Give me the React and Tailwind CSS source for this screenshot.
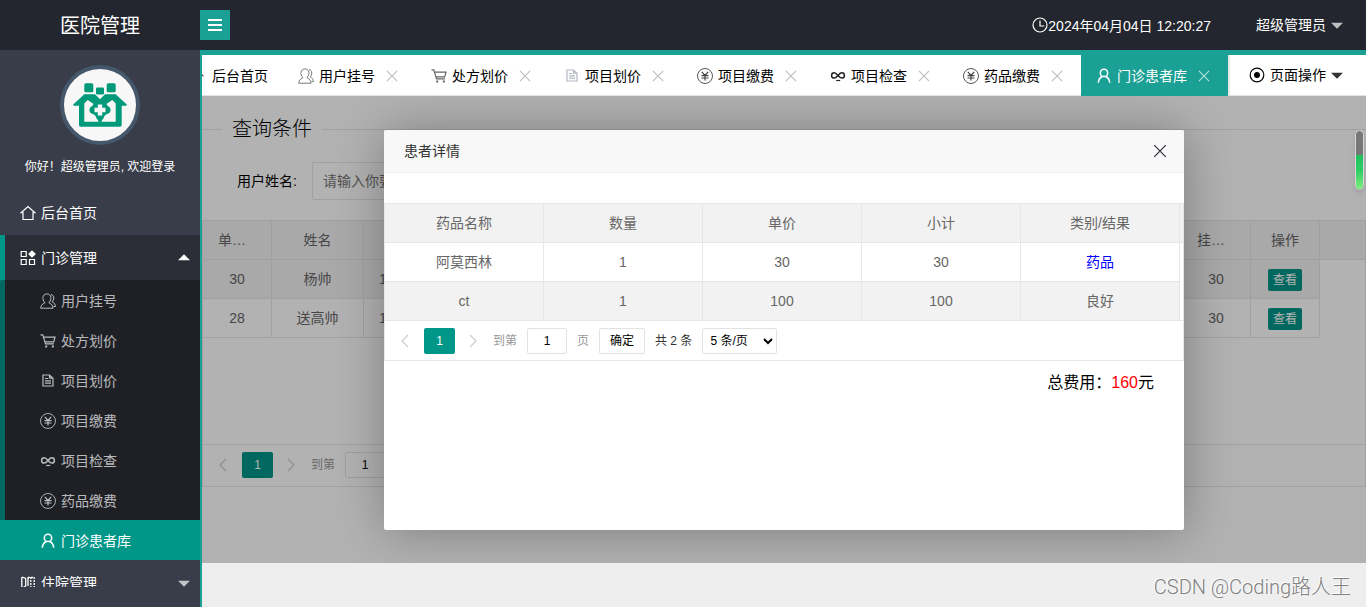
import React, { useState } from 'react';

const Icon = ({ name, className = '' }) => {
  const paths = {
    home: (
      <path d="M0.5 8.2 8 1.5l7.500 6.700M3 7v7.500h10V7" />
    ),
    grid: (
      <>
        <path d="M1.2 1.500h5v5h-5zM1.200 9.500h5v5h-5zM9.500 9.500h5v5h-5z" />
        <path d="M12 0.200 15.900 4 12 7.800 8.100 4z" fill="currentColor" stroke="none" />
      </>
    ),
    users: (
      <path d="M4.600 9.300C3.200 7.800 2.800 6 2.900 4.500 3.100 2.300 4.700 0.900 6.900 0.900s3.900 1.400 4 3.600c.1 1.600-.4 3.400-1.700 4.700v.9c2.300.9 3.600 2 3.900 5.100H.7c.3-3 1.600-4.200 3.900-5.100zM11 1.600c1.800.3 2.900 1.600 2.800 3.400-.1 1.600-.7 2.800-1.700 3.900 1.900.7 3.100 1.900 3.300 4.600h-1.800" strokeWidth="1" />
    ),
    cart: (
      <>
        <path d="M0.500 1.800h2.300l2.700 9h8.500M3.500 4.200h11.500l-1.300 4.600H4.900" />
        <path d="M5.200 12.500h2v2h-2zM11.800 12.500h2v2h-2z" fill="currentColor" stroke="none" />
      </>
    ),
    doc: (
      <path d="M3 2h6.500L13 5.200V13H3zM9.500 2v3.200H13M5 5.500h3M5 7.800h6M5 10.200h6" />
    ),
    yen: (
      <>
        <circle cx="8" cy="8" r="7.500" strokeWidth="0.900" />
        <path d="M4.800 3.800 8 7.500l3.200-3.700M8 7.500v5M4.500 7.700h7M4.500 10h7" strokeWidth="1.200" />
      </>
    ),
    infinity: (
      <>
        <path d="M8 7.500C6.700 6 5.800 4.800 4.200 4.800a2.600 2.600 0 0 0 0 5.200C5.800 10 6.800 8.800 8 7.500S10.200 4.800 11.800 4.800a2.600 2.600 0 0 1 0 5.200C10.200 10 9.300 9 8 7.500z" strokeWidth="1.500" />
        <path d="M6.200 12.500h4" />
      </>
    ),
    user: (
      <path d="M8 8.600a3.700 3.700 0 1 0 0-7.400 3.700 3.700 0 0 0 0 7.400zM2.300 14.800c.2-3.300 1.700-5.300 3.900-6.300M13.700 14.800c-.2-3.300-1.700-5.300-3.900-6.300" strokeWidth="1.500" />
    ),
    book: (
      <>
        <path d="M1.800 2v12M1.800 2l4 1.300M5.700 3.300V11l-3.900 2.500M8 2v9" strokeWidth="1.300" />
        <path d="M10.800 2v12M14.200 2v12M5.500 13.500h9M8 2.500h6" strokeDasharray="2 1" strokeWidth="1.300" />
      </>
    ),
    clock: (
      <>
        <circle cx="8" cy="8" r="7" />
        <path d="M8 3.500V9h4.200" />
      </>
    ),
    radio: (
      <>
        <circle cx="8" cy="8" r="6.800" />
        <circle cx="8" cy="8" r="3" fill="currentColor" stroke="none" />
      </>
    ),
    close: <path d="M2.200 2.200 13.800 13.800M13.800 2.200 2.200 13.800" />,
    left: <path d="M11 2 5 8l6 6" />,
    right: <path d="m5 2 6 6-6 6" />,
    up: <path d="M0 11 8 3l8 8z" fill="currentColor" stroke="none" />,
    down: <path d="M0 5h16l-8 8z" fill="currentColor" stroke="none" />,
  };
  return (
    <svg
      viewBox="0 0 16 16"
      fill="none"
      stroke="currentColor"
      strokeWidth="1.200"
      aria-hidden="true"
      className={`shrink-0 ${className}`}
    >
      {paths[name]}
    </svg>
  );
};

const subMenu = [
  { icon: 'users', label: '用户挂号' },
  { icon: 'cart', label: '处方划价' },
  { icon: 'doc', label: '项目划价' },
  { icon: 'yen', label: '项目缴费' },
  { icon: 'infinity', label: '项目检查' },
  { icon: 'yen', label: '药品缴费' },
  { icon: 'user', label: '门诊患者库' },
];

const iconColor = {
  users: 'text-[#777]',
  cart: 'text-[#666]',
  doc: 'text-[#b4b8c4]',
  yen: 'text-[#444]',
  infinity: 'text-[#222]',
};

const pacientes = [
  { id: 30, name: '杨帅', phone: '1', fee: 30 },
  { id: 28, name: '送高帅', phone: '1', fee: 30 },
];

const items = [
  { name: '阿莫西林', count: 1, price: 30, total: 30, type: '药品' },
  { name: 'ct', count: 1, price: 100, total: 100, type: '良好' },
];

const Logo = () => (
  <svg viewBox="0 0 56 46" className="w-14 h-[46px]" aria-hidden="true">
    <g fill="#009a7b">
      <rect x="12.300" y="1.200" width="9" height="9" rx="1.500" />
      <rect x="24" y="5.500" width="8" height="7" rx="1.200" />
      <rect x="34.700" y="1.200" width="9" height="9" rx="1.500" />
      <path d="M12.300 12.300H23l5 5 5-5h10.700L55 22.800l-1 1h-4.300V43a1.700 1.700 0 0 1-1.700 1.700H8.700A1.700 1.700 0 0 1 7 43V23.800H2l-1-1z" />
    </g>
    <path d="M12.300 21.500l3.400-3.500 5.800 4-4 6 8 8 1 3.700H12.300zM43.700 21.500L40.300 18l-5.800 4 4 6-8 8-1 3.700h14.200z" fill="#f7f7f7" />
    <path d="M28 17.500c2.500 0 4 1.800 4 4 0 1.500.8 2.500 2.500 2.500 2.200 0 4 1.500 4 4s-1.800 4-4 4c-1.700 0-2.500 1-2.500 2.500 0 2.200-1.500 4-4 4s-4-1.800-4-4c0-1.500-.8-2.500-2.500-2.500-2.200 0-4-1.500-4-4s1.800-4 4-4c1.700 0 2.500-1 2.500-2.500 0-2.200 1.500-4 4-4z" fill="#009a7b" />
    <path d="M25.800 22.500h4.400v3.300h3.300v4.400h-3.300v3.300h-4.400v-3.300h-3.300v-4.400h3.300z" fill="#f7f7f7" />
  </svg>
);

const Sidebar = () => (
  <aside className="w-[200px] shrink-0 bg-[#393D49] text-white flex flex-col overflow-hidden">
    <div className="h-[140px] shrink-0 pt-[15px] flex flex-col items-center">
      <div className="w-20 h-20 rounded-full border-4 border-[#44576b] bg-[#f7f7f7] flex items-center justify-center">
        <Logo />
      </div>
      <p className="mt-3 text-xs leading-5 whitespace-nowrap">你好！超级管理员, 欢迎登录</p>
    </div>
    <nav className="flex-1 min-h-0 overflow-hidden mb-5">
      <a href="#home" className="h-[45px] px-5 flex items-center gap-[5px]">
        <Icon name="home" className="w-4 h-4" />
        后台首页
      </a>
      <div className="bg-[linear-gradient(to_right,#009688_5px,#2b2e37_5px)]">
        <a href="#clinic" className="h-[45px] pl-5 pr-[10px] flex items-center gap-[5px]">
          <Icon name="grid" className="w-4 h-4" />
          <span className="flex-1">门诊管理</span>
          <Icon name="up" className="w-3 h-3" />
        </a>
        <div className="bg-black/30 rounded-t-xs">
          {subMenu.map((m, i) => (
            <a
              key={m.label}
              href={`#sub-${i}`}
              className={`h-10 pl-10 pt-0.5 flex items-center gap-[5px] ${
                m.label === '门诊患者库' ? 'bg-[#009688] text-white' : 'text-white/70'
              }`}
            >
              <Icon name={m.icon} className="w-4 h-4" />
              {m.label}
            </a>
          ))}
        </div>
      </div>
      <a href="#hospital" className="h-[45px] pl-5 pr-[10px] flex items-center gap-[5px]">
        <Icon name="book" className="w-4 h-4" />
        <span className="flex-1">住院管理</span>
        <Icon name="down" className="w-3 h-3 text-white/70" />
      </a>
    </nav>
  </aside>
);

const Tabs = () => (
  <div className="h-[41px] shrink-0 flex bg-white text-black border-b border-[#e2e2e2]">
    <div className="flex-1 min-w-0 flex justify-end overflow-hidden -mb-px">
      <a href="#home" className="shrink-0 pl-3 pr-[15px] flex items-center gap-2">
        <Icon name="home" className="w-4 h-4 text-[#555]" />
        后台首页
      </a>
      {subMenu.map((m) => {
        const active = m.label === '门诊患者库';
        return (
          <div
            key={m.label}
            className={`shrink-0 pl-[15px] pr-[17px] flex items-center gap-[5px] ${active ? 'bg-[#1aa094] text-white' : ''}`}
          >
            <Icon name={m.icon} className={`w-4 h-4 ${active ? 'text-white' : iconColor[m.icon]}`} />
            <span>{m.label}</span>
            <button aria-label={`关闭${m.label}`} className={`ml-[5px] ${active ? 'text-white/70' : 'text-[#bbb]'}`}>
              <Icon name="close" className="w-[14px] h-[14px]" />
            </button>
          </div>
        );
      })}
    </div>
    <button className="w-[138px] shrink-0 border-l-2 border-[#e8e8e8] pr-[23px] flex items-center justify-end gap-[5px]">
      <Icon name="radio" className="w-4 h-4" />
      页面操作
      <Icon name="down" className="w-3 h-3 text-[#333]" />
    </button>
  </div>
);

const Pager = ({ id, children }) => (
  <div className="pt-[7px] px-[15px] flex items-center text-xs text-[#333]">
    <button aria-label="上一页" className="w-3 mr-3 text-[#ccc]">
      <Icon name="left" className="w-4 h-4 -ml-[3px]" />
    </button>
    <button className="w-[31px] h-[26px] rounded-xs bg-[#009688] text-white">1</button>
    <button aria-label="下一页" className="w-4 ml-[10px] mr-3 text-[#ccc]">
      <Icon name="right" className="w-4 h-4" />
    </button>
    <label htmlFor={id} className="text-[#999] mr-[10px]">到第</label>
    <input
      id={id}
      defaultValue="1"
      className="w-10 h-[26px] border border-[#e2e2e2] rounded-xs bg-white text-center text-black"
    />
    {children}
  </div>
);

const th = 'h-[39px] border-b border-r border-[#e6e6e6] font-normal text-center';

const PatientPage = () => (
  <div className="h-full bg-white flex flex-col">
    <fieldset className="mt-5 border-t border-[#e6e6e6]">
      <legend className="ml-5 px-[10px] text-xl leading-[26px] font-light text-black">查询条件</legend>
      <div className="mt-5 ml-[35px] flex items-center gap-[15px] text-black">
        <label htmlFor="userName">用户姓名:</label>
        <input
          id="userName"
          placeholder="请输入你要查询"
          className="w-[190px] h-[38px] px-[10px] border border-[#e6e6e6] rounded-xs placeholder:text-[#757575]"
        />
      </div>
    </fieldset>

    <div className="mt-5 h-[267px] border border-[#e6e6e6] flex flex-col">
      <div className="flex-1">
        <table className="w-full table-fixed border-separate border-spacing-0 text-[#666]">
          <thead>
            <tr className="bg-[#f2f2f2]">
              <th className={`${th} w-[69px] px-[15px] truncate`}>单据编号</th>
              <th className={`${th} w-[92px]`}>姓名</th>
              <th className={th}></th>
              <th className={`${th} w-[69px] px-[15px] truncate`}>挂号费用</th>
              <th className={`${th} w-[69px]`}>操作</th>
              <th className="w-[45px] border-b border-[#e6e6e6]"></th>
            </tr>
          </thead>
          <tbody>
            {pacientes.map((p, i) => (
              <tr key={p.id}>
                <td className={`${th} ${i === 0 ? 'bg-[#f2f2f2]' : ''}`}>{p.id}</td>
                <td className={`${th} ${i === 0 ? 'bg-[#f2f2f2]' : ''}`}>{p.name}</td>
                <td className={`h-[39px] border-b border-r border-[#e6e6e6] pl-[15px] text-left ${i === 0 ? 'bg-[#f2f2f2]' : ''}`}>{p.phone}</td>
                <td className={`${th} ${i === 0 ? 'bg-[#f2f2f2]' : ''}`}>{p.fee}</td>
                <td className={`${th} pt-0.5 ${i === 0 ? 'bg-[#f2f2f2]' : ''}`}>
                  <button className="h-[22px] px-[5px] rounded-xs bg-[#009688] text-white text-xs align-middle">查看</button>
                </td>
                <td></td>
              </tr>
            ))}
          </tbody>
        </table>
      </div>
      <div className="h-[42px] border-t border-[#e6e6e6]">
        <Pager id="mainPage" />
      </div>
    </div>
  </div>
);

const DetailModal = ({ onClose }) => (
  <div role="dialog" aria-label="患者详情" className="w-[800px] h-[400px] rounded-xs bg-white shadow-[1px_1px_50px_rgba(0,0,0,0.3)]">
    <div className="h-[43px] pl-5 pr-4 flex items-center justify-between rounded-t-xs bg-[#f8f8f8] border-b border-[#eee] text-[#333]">
      <h2>患者详情</h2>
      <button onClick={onClose} aria-label="关闭" className="text-[#2d2c3b]">
        <Icon name="close" className="w-4 h-4" />
      </button>
    </div>

    <div className="mt-[30px] border border-[#e6e6e6]">
      <table className="w-full table-fixed border-separate border-spacing-0 text-[#666]">
        <thead>
          <tr className="bg-[#f2f2f2]">
            <th className={`${th} w-[159px]`}>药品名称</th>
            <th className={`${th} w-[159px]`}>数量</th>
            <th className={`${th} w-[159px]`}>单价</th>
            <th className={`${th} w-[159px]`}>小计</th>
            <th className={`${th} w-[159px]`}>类别/结果</th>
            <th className="border-b border-[#e6e6e6]"></th>
          </tr>
        </thead>
        <tbody>
          {items.map((it, i) => {
            const cell = `${th} ${i === 1 ? 'bg-[#f2f2f2]' : ''}`;
            return (
              <tr key={it.name}>
                <td className={cell}>{it.name}</td>
                <td className={cell}>{it.count}</td>
                <td className={cell}>{it.price}</td>
                <td className={cell}>{it.total}</td>
                <td className={`${cell} ${it.type === '药品' ? 'text-[#00f]' : ''}`}>{it.type}</td>
                <td className={i === 1 ? 'border-b border-[#e6e6e6]' : ''}></td>
              </tr>
            );
          })}
        </tbody>
      </table>
      <div className="h-[39px]">
        <Pager id="detailPage">
          <span className="mx-[10px] text-[#999]">页</span>
          <button className="w-[46px] h-[26px] border border-[#e2e2e2] rounded-xs bg-white text-black">确定</button>
          <span className="mx-[10px]">共 2 条</span>
          <select aria-label="每页条数" className="w-[75px] h-[26px] pl-[3px] border border-[#e2e2e2] rounded-xs bg-white text-black">
            <option>5 条/页</option>
          </select>
        </Pager>
      </div>
    </div>

    <p className="mt-[10px] pr-[30px] text-right text-base leading-6 text-black">
      总费用：<span className="text-[#f00]">160</span>元
    </p>
  </div>
);

const App = () => {
  const [open, setOpen] = useState(true);

  return (
    <div className="h-screen flex flex-col overflow-hidden text-sm font-['Liberation_Sans','Noto_Sans_CJK_SC',sans-serif]">
      {/* Header */}
      <header className="h-[50px] shrink-0 bg-[#23262E] text-white flex items-center">
        <h1 className="w-[200px] pt-0.5 text-xl text-center">医院管理</h1>
        <button aria-label="菜单" className="w-[30px] h-[30px] bg-[#1aa094] flex flex-col items-center justify-center gap-[3px]">
          <span className="w-[14px] h-0.5 bg-white" />
          <span className="w-[14px] h-0.5 bg-white" />
          <span className="w-[14px] h-0.5 bg-white" />
        </button>
        <div className="flex-1 flex items-center justify-end pr-[23px]">
          <Icon name="clock" className="w-4 h-4" />
          <time className="pt-0.5">2024年04月04日 12:20:27</time>
          <button className="ml-[45px] flex items-center gap-[5px]">
            超级管理员
            <Icon name="down" className="w-3 h-3 text-white/70" />
          </button>
        </div>
      </header>

      <div className="flex-1 min-h-0 flex">
        <Sidebar />
        <div className="flex-1 min-w-0 flex flex-col border-l-2 border-t-[5px] border-[#1aa094]">
          <Tabs />
          <main className="flex-1 min-h-0 relative">
            <PatientPage />
            {open && (
              <div className="absolute inset-0 bg-black/30 flex items-center justify-center overflow-hidden">
                <DetailModal onClose={() => setOpen(false)} />
              </div>
            )}
            <div className="absolute top-[34px] right-[2px] w-[9px] h-[60px] rounded-full border border-[#d8d8d8] overflow-hidden bg-[#777] shadow-md">
              <div className="mt-6 h-[34px] bg-linear-to-b from-[#1fbf5c] via-[#2fcf68] to-[#7df07d]" />
            </div>
          </main>
          <footer className="h-11 shrink-0 bg-[#eee] pt-1 pr-[15px] flex items-center justify-end">
            <span className="text-xl font-light font-['Roboto','Noto_Sans_CJK_SC',sans-serif] text-[#808080] [text-shadow:-1px_-1px_0_#fff]">
              CSDN @Coding路人王
            </span>
          </footer>
        </div>
      </div>
    </div>
  );
};

export default App;
